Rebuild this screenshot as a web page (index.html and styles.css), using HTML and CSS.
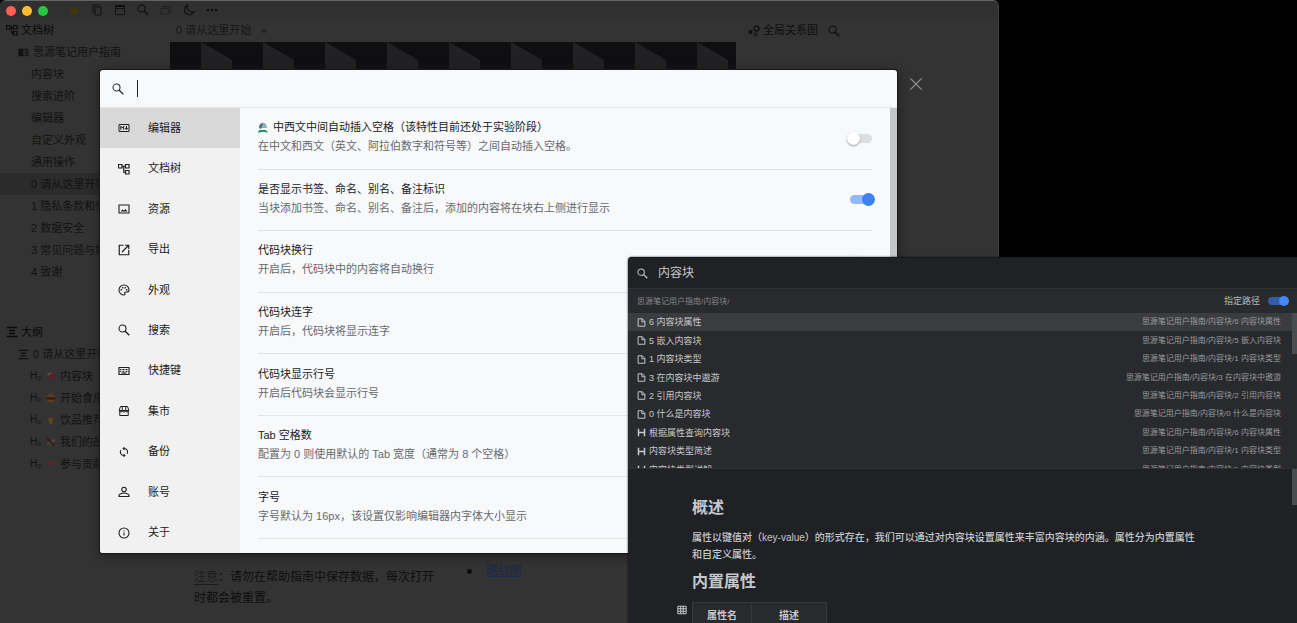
FILE: index.html
```html
<!DOCTYPE html>
<html lang="zh-CN">
<head>
<meta charset="utf-8">
<title>思源笔记</title>
<link rel="stylesheet" href="styles.css">
</head>
<body>
<svg class="defs" aria-hidden="true">
  <symbol id="search" viewBox="0 0 24 24"><circle cx="9" cy="9" r="7" fill="none" stroke="currentColor" stroke-width="2.200"/><path d="M14 14l8.500 8.500" stroke="currentColor" stroke-width="2.800"/></symbol>
  <symbol id="tree" viewBox="0 0 24 24"><path d="M1 3h7v7H1zM15 3h7v7h-7zM15 15h7v7h-7zM8 6.500h7M11.500 6.500v12H15" fill="none" stroke="currentColor" stroke-width="2.400"/></symbol>
  <symbol id="md" viewBox="0 0 24 24"><path d="M2 5h20v14H2z" fill="none" stroke="currentColor" stroke-width="2"/><path d="M5.500 15.500v-7l3 3.500 3-3.500v7M17 8v6" fill="none" stroke="currentColor" stroke-width="2"/><path d="M13.500 12h7L17 16z" fill="currentColor"/></symbol>
  <symbol id="image" viewBox="0 0 24 24"><path d="M2 4h20v16H2z" fill="none" stroke="currentColor" stroke-width="2.200"/><path d="M5 17l4-4 3 2 3-3 4 5z" fill="currentColor"/></symbol>
  <symbol id="export" viewBox="0 0 24 24"><path d="M11 2.500H2.500v19h19V12M14 2.500h7.500V10M21 3L8 16" fill="none" stroke="currentColor" stroke-width="2.400"/></symbol>
  <symbol id="palette" viewBox="0 0 24 24"><path d="M12 2a10 10 0 1 0 0 20c2 0 2.500-1.500 1.500-3s0-3 2-3H18c2 0 4-1.500 4-4 0-6-4.500-10-10-10z" fill="none" stroke="currentColor" stroke-width="2.200"/><circle cx="6.500" cy="11.500" r="1.700" fill="currentColor"/><circle cx="9.500" cy="7.500" r="1.700" fill="currentColor"/><circle cx="14.500" cy="7.500" r="1.700" fill="currentColor"/><circle cx="17.500" cy="11.500" r="1.700" fill="currentColor"/></symbol>
  <symbol id="keyboard" viewBox="0 0 24 24"><path d="M2 5h20v14H2z" fill="none" stroke="currentColor" stroke-width="2.400"/><path d="M4 9h16M4 12.500h16" stroke="currentColor" stroke-width="2" stroke-dasharray="2 1"/><path d="M7 16h10" stroke="currentColor" stroke-width="2.400"/></symbol>
  <symbol id="shop" viewBox="0 0 24 24"><path d="M5 3h14l2.500 7v1H2.500v-1zM3.500 11v10h17V11M8.500 3v8M15.500 3v8M3 11a3 3 0 0 0 6 0 3 3 0 0 0 6 0 3 3 0 0 0 6 0" fill="none" stroke="currentColor" stroke-width="2"/></symbol>
  <symbol id="sync" viewBox="0 0 24 24"><path d="M12 5a7 7 0 0 1 6 11M12 19A7 7 0 0 1 6 8" fill="none" stroke="currentColor" stroke-width="2.200"/><path d="M13 1v8L8.500 5zM11 15v8l4.500-4z" fill="currentColor"/></symbol>
  <symbol id="user" viewBox="0 0 24 24"><circle cx="12" cy="7" r="4.500" fill="none" stroke="currentColor" stroke-width="2.400"/><path d="M2 21v-2c0-3 6-5 10-5s10 2 10 5v2z" fill="none" stroke="currentColor" stroke-width="2.400"/></symbol>
  <symbol id="info" viewBox="0 0 24 24"><circle cx="12" cy="12" r="10" fill="none" stroke="currentColor" stroke-width="2.200"/><path d="M12 11v6M12 7v2" stroke="currentColor" stroke-width="2.200"/></symbol>
  <symbol id="file" viewBox="0 0 24 24"><path d="M3 2h11l7 7v13H3zM13 2v8h8" fill="none" stroke="currentColor" stroke-width="2.600"/></symbol>
  <symbol id="heading" viewBox="0 0 24 24"><path d="M4 2v20M20 2v20M4 12h16" fill="none" stroke="currentColor" stroke-width="4"/></symbol>
  <symbol id="outline" viewBox="0 0 24 24"><path d="M2 3h20M6 9h12M6 15h12M1 21h22" stroke="currentColor" stroke-width="2.600"/></symbol>
  <symbol id="book" viewBox="0 0 24 24"><path d="M1 4h10.500v16H1z" fill="currentColor"/><path d="M12 5h10v14H12M15 9h5M15 12h5M15 15h5" fill="none" stroke="currentColor" stroke-width="2"/></symbol>
  <symbol id="graph" viewBox="0 0 24 24"><circle cx="5" cy="14" r="4" fill="currentColor"/><circle cx="17" cy="7" r="5" fill="none" stroke="currentColor" stroke-width="2.500"/><circle cx="15" cy="19" r="3" fill="none" stroke="currentColor" stroke-width="2"/></symbol>
  <symbol id="copy" viewBox="0 0 24 24"><path d="M8 6h12v16H8zM4 18V2h13" fill="none" stroke="currentColor" stroke-width="2"/></symbol>
  <symbol id="calendar" viewBox="0 0 24 24"><path d="M3 3h18v18H3zM3 9h18M3 5h18" fill="none" stroke="currentColor" stroke-width="2"/></symbol>
  <symbol id="window" viewBox="0 0 24 24"><path d="M2 9h16v11H2zM6 9V5h16v11h-4" fill="none" stroke="currentColor" stroke-width="2"/></symbol>
  <symbol id="moon" viewBox="0 0 24 24"><path d="M9 2a10 10 0 1 0 13 13A10 10 0 0 1 9 2z" fill="none" stroke="currentColor" stroke-width="2.500"/></symbol>
  <symbol id="dots" viewBox="0 0 24 24"><circle cx="4" cy="12" r="2.500" fill="currentColor"/><circle cx="12" cy="12" r="2.500" fill="currentColor"/><circle cx="20" cy="12" r="2.500" fill="currentColor"/></symbol>
  <symbol id="vip" viewBox="0 0 24 24"><path d="M2 6l6 4 4-6 4 6 6-4-3 14H5z" fill="currentColor"/></symbol>
  <symbol id="close" viewBox="0 0 24 24"><path d="M1 1l22 22M23 1L1 23" stroke="currentColor" stroke-width="2.400"/></symbol>
  <symbol id="grid" viewBox="0 0 24 24"><path d="M2 3h20v18H2zM2 9h20M2 15h20M9 3v18M15 3v18" fill="none" stroke="currentColor" stroke-width="2.400"/></symbol>
</svg>

<main class="app">
  <header class="titlebar">
    <span class="lights"><i class="light red"></i><i class="light yellow"></i><i class="light green"></i></span>
    <nav class="tools">
      <button class="vip" aria-label="会员"><svg><use href="#vip"/></svg></button>
      <button aria-label="复制"><svg><use href="#copy"/></svg></button>
      <button aria-label="日历"><svg><use href="#calendar"/></svg></button>
      <button aria-label="搜索"><svg><use href="#search"/></svg></button>
      <button class="faint" aria-label="窗口"><svg><use href="#window"/></svg></button>
      <button aria-label="主题"><svg><use href="#moon"/></svg></button>
      <button aria-label="更多"><svg><use href="#dots"/></svg></button>
    </nav>
  </header>
  <div class="workspace">
    <aside class="dock">
      <h2 class="dock-title"><svg><use href="#tree"/></svg>文档树</h2>
      <ul class="tree">
        <li class="root"><svg><use href="#book"/></svg>思源笔记用户指南</li>
        <li>内容块</li>
        <li>搜索进阶</li>
        <li>编辑器</li>
        <li>自定义外观</li>
        <li>通用操作</li>
        <li class="current">0 请从这里开始</li>
        <li>1 隐私条款和使用</li>
        <li>2 数据安全</li>
        <li>3 常见问题与解答</li>
        <li>4 致谢</li>
      </ul>
      <h2 class="dock-title outline-title"><svg><use href="#outline"/></svg>大纲</h2>
      <ul class="tree">
        <li class="root"><svg><use href="#outline"/></svg>0 请从这里开始</li>
        <li class="head"><small>H₂</small><svg viewBox="0 0 12 12"><path d="M1 4l4-3 6 6-4 4z" fill="#5c1f22"/><path d="M1 4l4-3 2 2-4 3z" fill="#6a4040"/></svg>内容块</li>
        <li class="head"><small>H₂</small><svg viewBox="0 0 12 12"><path d="M1 5c0-5 10-5 10 0z" fill="#5e3f1c"/><path d="M1 5h10v3H1z" fill="#381a14"/><path d="M1 8h10c0 4-10 4-10 0z" fill="#5e3f1c"/></svg>开始食用</li>
        <li class="head"><small>H₂</small><svg viewBox="0 0 12 12"><path d="M3 3h6L8 8 6 11 3 8z" fill="#5c4818"/><path d="M7 1l2 3H6z" fill="#602020"/><path d="M4 10h5v1H4z" fill="#484848"/></svg>饮品推荐</li>
        <li class="head"><small>H₂</small><svg viewBox="0 0 12 12"><path d="M1 1h5v4H1zM6 6l5 5H5z" fill="#4a1d24"/><circle cx="8" cy="4" r="2.500" fill="#524a4a"/><circle cx="4" cy="8" r="2.500" fill="#4c4848"/><path d="M2 3l8 6M8 2L3 10" stroke="#161616"/></svg>我们的故事</li>
        <li class="head"><small>H₂</small><svg viewBox="0 0 12 12"><path d="M6 9L3 5c0-3 2-2 3-1 1-1 3-2 3 1z" fill="#6b1f28"/></svg>参与贡献</li>
      </ul>
    </aside>
    <section class="editor">
      <div class="tab">0 请从这里开始<i class="mark"></i></div>
      <svg class="banner" aria-hidden="true">
        <defs><pattern id="cubes" x="31" width="62" height="60" patternUnits="userSpaceOnUse"><path d="M0 0l31 18v42H0z" fill="#212123"/></pattern></defs>
        <rect width="100%" height="100%" fill="#0f0f12"/><rect width="100%" height="100%" fill="url(#cubes)"/>
      </svg>
      <div class="document">
        <p><u>注意</u>：请勿在帮助指南中保存数据，每次打开时都会被重置。</p>
        <ul><li><a href="#roadmap">路线图</a></li></ul>
      </div>
    </section>
    <aside class="relations">
      <h2><svg><use href="#graph"/></svg>全局关系图</h2>
      <svg><use href="#search"/></svg>
    </aside>
  </div>

  <button class="dismiss" aria-label="关闭"><svg><use href="#close"/></svg></button>

  <section class="settings" role="dialog" aria-label="设置">
    <label class="settings-search">
      <svg><use href="#search"/></svg>
      <span class="caret"></span>
      <input type="text" aria-label="搜索设置">
    </label>
    <div class="settings-body">
      <nav class="menu">
        <button class="active"><svg><use href="#md"/></svg>编辑器</button>
        <button><svg><use href="#tree"/></svg>文档树</button>
        <button><svg><use href="#image"/></svg>资源</button>
        <button><svg><use href="#export"/></svg>导出</button>
        <button><svg><use href="#palette"/></svg>外观</button>
        <button><svg><use href="#search"/></svg>搜索</button>
        <button><svg><use href="#keyboard"/></svg>快捷键</button>
        <button><svg><use href="#shop"/></svg>集市</button>
        <button><svg><use href="#sync"/></svg>备份</button>
        <button><svg><use href="#user"/></svg>账号</button>
        <button><svg><use href="#info"/></svg>关于</button>
      </nav>
      <div class="options">
        <label class="option"><span><b><svg class="lab" viewBox="0 0 12 12"><path d="M1 6c0-7 8-7 8 0z" fill="#8fb1b5"/><path d="M1 6c0-4 3-5 4-5L3 7z" fill="#477077"/><path d="M0 11l1-3h7l2 3-3-1H3z" fill="#279263"/></svg>中西文中间自动插入空格（该特性目前还处于实验阶段）</b><em>在中文和西文（英文、阿拉伯数字和符号等）之间自动插入空格。</em></span><input class="switch" type="checkbox"></label>
        <label class="option"><span><b>是否显示书签、命名、别名、备注标识</b><em>当块添加书签、命名、别名、备注后，添加的内容将在块右上侧进行显示</em></span><input class="switch" type="checkbox" checked></label>
        <label class="option"><span><b>代码块换行</b><em>开启后，代码块中的内容将自动换行</em></span><input class="switch" type="checkbox"></label>
        <label class="option"><span><b>代码块连字</b><em>开启后，代码块将显示连字</em></span><input class="switch" type="checkbox"></label>
        <label class="option"><span><b>代码块显示行号</b><em>开启后代码块会显示行号</em></span><input class="switch" type="checkbox"></label>
        <div class="option"><span><b>Tab 空格数</b><em>配置为 0 则使用默认的 Tab 宽度（通常为 8 个空格）</em></span></div>
        <div class="option"><span><b>字号</b><em>字号默认为 16px，该设置仅影响编辑器内字体大小显示</em></span></div>
      </div>
      <div class="scrollbar"></div>
    </div>
  </section>
</main>

<section class="finder" role="dialog" aria-label="搜索">
  <label class="finder-search"><svg><use href="#search"/></svg><input type="text" value="内容块" aria-label="搜索内容"></label>
  <div class="scope"><span>思源笔记用户指南/内容块/</span><label>指定路径<input class="switch dark" type="checkbox" checked></label></div>
  <div class="results">
    <ul>
      <li class="selected"><svg><use href="#file"/></svg><span>6 内容块属性</span><small>思源笔记用户指南/内容块/6 内容块属性</small></li>
      <li><svg><use href="#file"/></svg><span>5 嵌入内容块</span><small>思源笔记用户指南/内容块/5 嵌入内容块</small></li>
      <li><svg><use href="#file"/></svg><span>1 内容块类型</span><small>思源笔记用户指南/内容块/1 内容块类型</small></li>
      <li><svg><use href="#file"/></svg><span>3 在内容块中遨游</span><small>思源笔记用户指南/内容块/3 在内容块中遨游</small></li>
      <li><svg><use href="#file"/></svg><span>2 引用内容块</span><small>思源笔记用户指南/内容块/2 引用内容块</small></li>
      <li><svg><use href="#file"/></svg><span>0 什么是内容块</span><small>思源笔记用户指南/内容块/0 什么是内容块</small></li>
      <li><svg><use href="#heading"/></svg><span>根据属性查询内容块</span><small>思源笔记用户指南/内容块/6 内容块属性</small></li>
      <li><svg><use href="#heading"/></svg><span>内容块类型简述</span><small>思源笔记用户指南/内容块/1 内容块类型</small></li>
      <li><svg><use href="#heading"/></svg><span>内容块类型详解</span><small>思源笔记用户指南/内容块/1 内容块类型</small></li>
    </ul>
    <div class="thumb"></div>
  </div>
  <article class="preview">
    <div class="prose">
      <h3>概述</h3>
      <p>属性以键值对（key-value）的形式存在，我们可以通过对内容块设置属性来丰富内容块的内涵。属性分为内置属性<br>和自定义属性。</p>
      <h3>内置属性</h3>
      <div class="table-block"><svg><use href="#grid"/></svg>
        <table><tr><th>属性名</th><th>描述</th></tr></table>
      </div>
    </div>
    <div class="thumb"></div>
  </article>
</section>
</body>
</html>
```

FILE: styles.css
```css
* { box-sizing: border-box; margin: 0; padding: 0; }
html, body { height: 100%; }
body {
  position: relative;
  overflow: hidden;
  background: #000;
  font: 11px/19px "Liberation Sans", "Noto Sans CJK SC", sans-serif;
}
button, input { font: inherit; color: inherit; border: 0; background: none; outline: 0; }
ul { list-style: none; }
svg { flex: none; width: 12px; height: 12px; }
h2 { font: inherit; }
b, em { font-weight: 400; font-style: normal; }
.defs { position: absolute; width: 0; height: 0; }

/* Main window */
.app {
  position: absolute;
  inset: 0 298px 0 0;
  display: flex;
  flex-direction: column;
  overflow: hidden;
  background: #333;
  border-top: 1px solid #626462;
  border-right: 1px solid #404040;
  border-radius: 6px 6px 0 0;
  color: #0e0e0e;
}
.titlebar { display: flex; align-items: center; height: 18px; background: #303030; }
.lights { display: flex; gap: 6px; padding: 1px 20px 0 6px; }
.light { width: 10px; height: 10px; border-radius: 50%; }
.red { background: #fe5f57; }
.yellow { background: #febb2e; }
.green { background: #28c840; }
.tools { display: flex; gap: 11px; color: #111; }
.tools button { display: flex; }
.tools .vip { color: #40370d; }
.tools .faint { color: #202020; }

.workspace { flex: 1; display: flex; min-height: 0; }
.dock { width: 170px; line-height: 22px; white-space: nowrap; color: #121212; }
.dock-title { display: flex; align-items: center; gap: 3px; padding-left: 6px; color: #0a0a0a; }
.outline-title { margin-top: 38px; }
.tree li { display: flex; align-items: center; height: 22px; padding-left: 31px; }
.tree .root { gap: 4px; padding-left: 18px; }
.tree .root svg { width: 11px; height: 11px; }
.tree .current { background: #2b2b2b; }
.tree .head { gap: 4px; padding-left: 30px; }
.tree .head svg { width: 10px; height: 10px; }
.tree small { width: 12px; font-size: 10px; }

.editor { flex: 1; display: flex; flex-direction: column; }
.tab { display: flex; align-items: center; gap: 11px; height: 23px; padding-left: 6px; color: #161616; }
.mark { width: 4px; height: 4px; border-radius: 50%; background: #232323; }
.banner { width: 100%; height: 150px; }
.document {
  display: flex;
  gap: 21px;
  margin-top: auto;
  padding: 0 24px 14px;
  font-size: 12px;
  line-height: 21px;
}
.document p { width: 252px; }
.document u { color: #1c1c1c; text-underline-offset: 3px; }
.document ul { margin-top: -6px; }
.document li { display: flex; align-items: center; gap: 14px; }
.document li::before { content: ""; width: 5px; height: 5px; border-radius: 50%; background: #0d0d0d; }
.document a { color: #1b2a4d; }
.relations { display: flex; gap: 10px; width: 262px; padding-left: 12px; align-items: center; align-self: flex-start; height: 23px; }
.relations h2 { display: flex; align-items: center; gap: 3px; }

.dismiss { position: absolute; top: 77px; right: 76px; display: flex; color: #8b8b8b; }

/* Settings dialog */
.settings {
  position: absolute;
  inset: 69px 101px 70px 100px;
  display: flex;
  flex-direction: column;
  overflow: hidden;
  border-radius: 3px;
  background: #f8f9fb;
  box-shadow: 0 0 0 1px #181818, 0 2px 12px #1c1c1c;
  color: #202124;
}
.settings-search { display: flex; align-items: center; height: 38px; padding-left: 12px; border-bottom: 1px solid #e5e7e9; }
.settings-search svg { color: #333; }
.caret { width: 1px; height: 17px; margin-left: 13px; background: #222; }
.settings-search input { flex: 1; height: 30px; }
.settings-body { flex: 1; display: flex; min-height: 0; }
.menu { display: flex; flex-direction: column; width: 140px; background: #f1f1f1; }
.menu button { flex: 1; display: flex; align-items: center; gap: 18px; padding-left: 18px; }
.menu .active { background: #d9d9d9; }
.options {
  flex: 1;
  display: grid;
  grid-template-rows: repeat(7, 1fr);
  padding: 0 18px 14px;
}
.option { display: flex; align-items: center; justify-content: space-between; border-bottom: 1px solid #e2e4e7; }
.option span { padding-bottom: 2px; }
.option b, .option em { display: flex; align-items: center; }
.option em { color: #66696e; }
.lab { margin-right: 3px; }
.scrollbar { width: 7px; background: #c5c6c8; }

.switch { appearance: none; position: relative; width: 22px; height: 9px; border-radius: 5px; background: #dddedf; }
.switch::before {
  content: "";
  position: absolute;
  top: -2px;
  left: -3px;
  width: 13px;
  height: 13px;
  border-radius: 50%;
  background: #fff;
  box-shadow: 0 1px 2px #999;
}
.switch:checked { background: #93b8f8; }
.switch:checked::before { left: 12px; background: #3b82f3; box-shadow: none; }

/* Search window */
.finder {
  position: absolute;
  inset: 257px 0 0 628px;
  display: flex;
  flex-direction: column;
  overflow: hidden;
  border-top: 1px solid #171819;
  border-radius: 4px 0 0 0;
  background: #202124;
  box-shadow: 0 0 2px #111;
  color: #c6c8cb;
}
.finder-search { display: flex; align-items: center; gap: 10px; height: 31px; padding-left: 9px; font-size: 12px; border-bottom: 1px solid #303134; }
.finder-search svg { width: 11px; height: 11px; }
.finder-search input { flex: 1; }
.scope { display: flex; align-items: center; justify-content: space-between; height: 24px; padding: 0 9px; background: #292a2d; font-size: 8px; color: #85878a; }
.scope label { display: flex; align-items: center; gap: 8px; font-size: 9px; color: #b5b7ba; }
.switch.dark { width: 20px; height: 8px; background: #355da6; }
.switch.dark::before { top: -1px; left: 11px; width: 10px; height: 10px; background: #4389fa; }
.results { display: flex; height: 156px; overflow: hidden; background: #292a2d; border-bottom: 1px solid #303134; }
.results ul { flex: 1; display: grid; grid-template-rows: repeat(9, 1fr); height: 166px; }
.results li { display: flex; align-items: center; gap: 3px; padding: 0 11px 0 9px; font-size: 9px; line-height: 18px; }
.results li svg { width: 9px; height: 9px; }
.results small { margin-left: auto; font-size: 8px; color: #999b9e; }
.results .selected { background: #3b3c3f; }
.thumb { width: 5px; height: 41px; background: #4b4c4f; }
.preview { flex: 1; display: flex; min-height: 0; }
.preview .thumb { height: 36px; }
.prose { flex: 1; padding: 27px 48px 0 64px; font-size: 10px; font-weight: 500; line-height: 17px; }
.prose h3 { font-size: 16px; line-height: 24px; font-weight: 700; }
.prose p { margin: 9px 0 7px; white-space: nowrap; }
.table-block { display: flex; gap: 5px; margin: 8px 0 0 -15px; }
.table-block svg { width: 10px; height: 10px; margin-top: 3px; }
.prose table { border-collapse: collapse; background: #292a2d; }
.prose th { width: 59px; height: 25px; border: 1px solid #37393c; font-size: 10px; }
.prose th + th { width: 75px; }
```
